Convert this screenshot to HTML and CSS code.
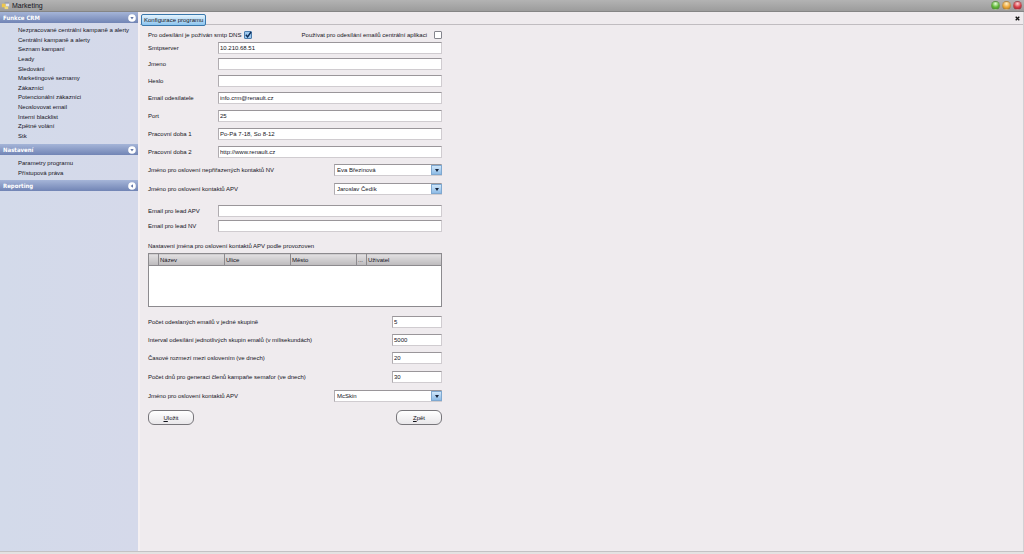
FILE: index.html
```
<!DOCTYPE html>
<html lang="cs">
<head>
<meta charset="utf-8">
<title>Marketing</title>
<link rel="stylesheet" href="styles.css">
</head>
<body>
<header class="titlebar">
  <svg class="app-icon" viewBox="0 0 10 10" aria-hidden="true"><rect x="4" y="1" width="5" height="6" fill="#9a9eb0"/><rect x="5" y="3" width="4" height="3" fill="#e4e6f0"/><rect x="1" y="3" width="4" height="4" fill="#f0c848"/><rect x="4" y="6" width="4" height="3" fill="#f0d878"/></svg>
  <h1 class="title">Marketing</h1>
  <button class="light green" aria-label="Minimalizovat"></button>
  <button class="light amber" aria-label="Maximalizovat"></button>
  <button class="light red" aria-label="Zavřít"></button>
</header>
<div class="shell">
  <nav class="sidebar">
    <button class="group">Funkce CRM<svg class="chev" viewBox="0 0 8 8" aria-hidden="true"><circle cx="4" cy="4" r="3.8" fill="#fff"/><path d="M2.3 3h3.4L4 5.4z" fill="#6578a8"/></svg></button>
    <ul class="links links-main">
      <li><a href="#">Nezpracované centrální kampaně a alerty</a></li>
      <li><a href="#">Centrální kampaně a alerty</a></li>
      <li><a href="#">Seznam kampaní</a></li>
      <li><a href="#">Leady</a></li>
      <li><a href="#">Sledování</a></li>
      <li><a href="#">Marketingové seznamy</a></li>
      <li><a href="#">Zákazníci</a></li>
      <li><a href="#">Potencionální zákazníci</a></li>
      <li><a href="#">Neoslovovat email</a></li>
      <li><a href="#">Interní blacklist</a></li>
      <li><a href="#">Zpětné volání</a></li>
      <li><a href="#">Stk</a></li>
    </ul>
    <button class="group">Nastavení<svg class="chev" viewBox="0 0 8 8" aria-hidden="true"><circle cx="4" cy="4" r="3.8" fill="#fff"/><path d="M2.3 3h3.4L4 5.4z" fill="#6578a8"/></svg></button>
    <ul class="links">
      <li><a href="#">Parametry programu</a></li>
      <li><a href="#">Přístupová práva</a></li>
    </ul>
    <button class="group">Reporting<svg class="chev" viewBox="0 0 8 8" aria-hidden="true"><circle cx="4" cy="4" r="3.8" fill="#fff"/><path d="M5 2.3v3.4L2.6 4z" fill="#6578a8"/></svg></button>
  </nav>
  <main class="main">
    <div class="tabs">
      <button class="tab">Konfigurace programu</button>
      <button class="close" aria-label="Zavřít záložku"><svg viewBox="0 0 5 5" aria-hidden="true"><path d="M.7.7l3.6 3.6M4.3.7L.7 4.3" stroke="#111" stroke-width="1.3"/></svg></button>
    </div>
    <form class="form">
      <div class="row checks">
        <label for="dns">Pro odesílání je požíván smtp DNS</label><span class="tick"><input class="check" type="checkbox" id="dns" checked><svg viewBox="0 0 8 8" aria-hidden="true"><path d="M1.8 3.8l1.8 2L7 1" fill="none" stroke="#0c2c58" stroke-width="1.4"/></svg></span>
        <label class="push" for="central">Používat pro odesílání emailů centrální aplikaci</label><input class="check" type="checkbox" id="central">
      </div>
      <div class="row first"><label for="smtp">Smtpserver</label><input class="text" id="smtp" value="10.210.68.51"></div>
      <div class="row short"><label for="name">Jmeno</label><input class="text" id="name"></div>
      <div class="row short"><label for="pass">Heslo</label><input class="text" id="pass"></div>
      <div class="row"><label for="mail">Email odesílatele</label><input class="text" id="mail" value="info.crm@renault.cz"></div>
      <div class="row"><label for="port">Port</label><input class="text" id="port" value="25"></div>
      <div class="row"><label for="w1">Pracovní doba 1</label><input class="text" id="w1" value="Po-Pá 7-18, So 8-12"></div>
      <div class="row"><label for="w2">Pracovní doba 2</label><input class="text" id="w2" value="http://www.renault.cz"></div>
      <div class="row"><label for="nv">Jméno pro oslovení nepřiřazených kontaktů NV</label><span class="combo"><select id="nv"><option>Eva Březinová</option></select></span></div>
      <div class="row tall"><label for="apv">Jméno pro oslovení kontaktů APV</label><span class="combo"><select id="apv"><option>Jaroslav Čedík</option></select></span></div>
      <div class="leads">
        <div class="row tight"><label for="la">Email pro lead APV</label><input class="text" id="la"></div>
        <div class="row tight"><label for="ln">Email pro lead NV</label><input class="text" id="ln"></div>
      </div>
      <div class="grid">
        <table>
          <caption>Nastavení jména pro oslovení kontaktů APV podle provozoven</caption>
          <colgroup><col class="c-mark"><col class="c-name"><col class="c-name"><col class="c-name"><col class="c-mark"><col></colgroup>
          <thead><tr><th></th><th>Název</th><th>Ulice</th><th>Město</th><th>...</th><th>Uživatel</th></tr></thead>
          <tbody><tr><td colspan="6"></td></tr></tbody>
        </table>
      </div>
      <div class="row"><label for="cnt">Počet odeslaných emailů v jedné skupině</label><input class="text num" id="cnt" value="5"></div>
      <div class="row"><label for="int">Interval odesílání jednotlivých skupin emalů (v milisekundách)</label><input class="text num" id="int" value="5000"></div>
      <div class="row"><label for="gap">Časové rozmezí mezi oslovením (ve dnech)</label><input class="text num" id="gap" value="20"></div>
      <div class="row tall"><label for="days">Počet dnů pro generaci členů kampaňe semafor (ve dnech)</label><input class="text num" id="days" value="30"></div>
      <div class="row last"><label for="apv2">Jméno pro oslovení kontaktů APV</label><span class="combo"><select id="apv2"><option>McSkin</option></select></span></div>
      <div class="actions"><button class="btn" type="button"><u>U</u>ložit</button><button class="btn" type="button"><u>Z</u>pět</button></div>
    </form>
  </main>
</div>
<footer class="status"></footer>
</body>
</html>
```
FILE: styles.css
```
* { box-sizing: border-box; }
body {
  margin: 0;
  min-height: 100vh;
  display: flex;
  flex-direction: column;
  background: #efebee;
  color: #14141c;
  font: 6px/10px "Liberation Sans", Arial, sans-serif;
}
button, input, select { font: inherit; color: inherit; margin: 0; }
button { padding: 0; border: 0; background: none; }

.titlebar {
  display: flex;
  align-items: center;
  gap: 2px;
  height: 12px;
  padding: 0 2px 0 1px;
  background: linear-gradient(#b3b3b3, #9c9c9c);
  border-bottom: 1px solid #858585;
}
.app-icon { width: 9px; height: 9px; }
.title { margin: 0; flex: 1; font-size: 7px; font-weight: 400; line-height: 11px; }
.light { width: 9px; height: 9px; border-radius: 50%; border: 1px solid #77777766; }
.green { background: radial-gradient(circle at 50% 25%, #e6ffd8, #62b83a 55%, #3f8a22); }
.amber { background: radial-gradient(circle at 50% 25%, #fff0c8, #eda83c 55%, #b87818); }
.red { background: radial-gradient(circle at 50% 25%, #ffd8d8, #d8404a 55%, #a01824); }

.shell { flex: 1; display: flex; }
.sidebar {
  flex: 0 0 138px;
  background: linear-gradient(90deg, #d3daea, #d5d9ea);
}
.group {
  display: flex;
  align-items: center;
  justify-content: space-between;
  width: 100%;
  height: 11px;
  padding: 0 2px 0 3px;
  background: linear-gradient(#a5b5d8, #7184b5);
  color: #fff;
  font: 700 6px/10px "DejaVu Sans Condensed", "DejaVu Sans", sans-serif;
  font-stretch: condensed;
}
.chev { width: 8px; height: 8px; }
.links {
  list-style: none;
  margin: 0;
  padding: 3px 0 2px 18px;
  display: grid;
  grid-auto-rows: 1fr;
  align-items: center;
  height: 25px;
}
.links-main { height: 121px; padding-bottom: 3px; }
.links a { display: block; color: inherit; text-decoration: none; line-height: 9px; }

.main {
  flex: 1;
  border-left: 2px solid #f5f0f2;
  border-right: 1px solid #d4d0d4;
}
.tabs {
  display: flex;
  align-items: flex-start;
  justify-content: space-between;
  height: 13px;
  padding: 2px 3px 0 1px;
  border-bottom: 1px solid #c0bcc0;
}
.tab {
  height: 12px;
  padding: 0 2px;
  border: 1px solid #3a78ac;
  border-radius: 2px;
  background: linear-gradient(#e4f3fd, #8cc4ee);
}
.close { width: 5px; height: 5px; margin-top: 2px; display: flex; }

.form { width: 302px; padding: 3px 0 0 8px; }
.row { display: flex; align-items: center; justify-content: space-between; height: 18px; }
.checks { height: 13px; gap: 3px; }
.push { margin: 0 4px 0 auto; }
.first { height: 14px; }
.short { height: 17px; }
.tight { height: 15px; }
.tall { height: 19px; }
.last { height: 20px; }
.leads { padding: 5px 0 6px; }
.text {
  width: 224px;
  height: 12px;
  padding: 0 1px;
  background: #fff;
  border: 1px solid #d0ccd0;
  border-top-color: #9a969a;
  border-left-color: #b0acb0;
}
.num { width: 50px; }
.check {
  appearance: none;
  display: block;
  width: 8px;
  height: 8px;
  background: #fff;
  border: 1px solid #85858d;
  border-radius: 1px;
}
.check:checked { background: #9cc8ee; border-color: #4c7cac; }
.tick { position: relative; }
.tick svg { position: absolute; inset: 0; pointer-events: none; }
.combo { position: relative; width: 108px; height: 12px; }
.combo select {
  appearance: none;
  display: block;
  width: 100%;
  height: 12px;
  padding: 0 12px 0 2px;
  background: #fff;
  border: 1px solid #d0ccd0;
  border-top-color: #9a969a;
  border-left-color: #b0acb0;
  border-radius: 0;
}
.combo::after {
  content: "";
  position: absolute;
  top: 1px;
  right: 0;
  width: 11px;
  height: 10px;
  border: 1px solid #7fa8d0;
  box-sizing: border-box;
  background: linear-gradient(#cfe6fa, #8dbbe6);
  pointer-events: none;
}
.combo::before {
  content: "";
  position: absolute;
  z-index: 1;
  top: 5px;
  right: 3px;
  border: 2px solid transparent;
  border-top: 3px solid #16243c;
  border-bottom: 0;
  pointer-events: none;
}

.grid { padding-bottom: 6px; }
table { width: 100%; table-layout: fixed; border-collapse: collapse; background: #fff; border: 1px solid #8c8a8e; }
caption { text-align: left; height: 14px; line-height: 14px; }
th {
  height: 12px;
  padding: 0 1px;
  line-height: 10px;
  text-align: left;
  font-weight: 400;
  background: linear-gradient(#e2e0e2, #bcbabc);
  border: 1px solid #8c8a8e;
}
td { height: 41px; padding: 0; }
.c-mark { width: 10px; }
.c-name { width: 66px; }

.actions { display: flex; justify-content: space-between; padding-top: 4px; }
.btn {
  width: 46px;
  height: 15px;
  border: 1px solid #77757a;
  border-radius: 6px;
  background: linear-gradient(#fff, #e9e7ea);
}
.status { height: 3px; background: #e4e2e2; border-top: 1px solid #c4c2c4; }
```
